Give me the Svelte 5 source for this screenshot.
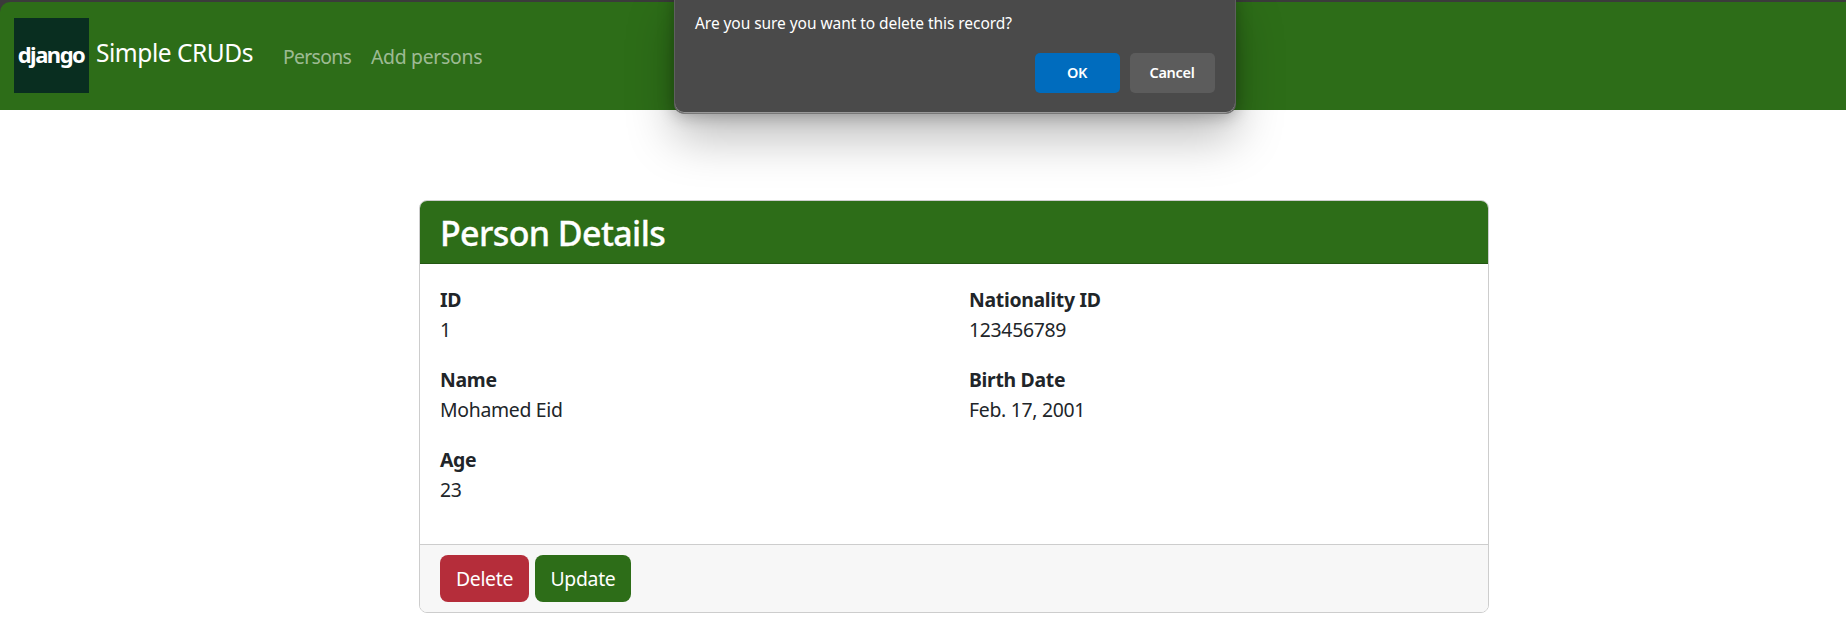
<script>
  const columns = [
    [
      { label: 'ID', value: '1' },
      { label: 'Name', value: 'Mohamed Eid' },
      { label: 'Age', value: '23' }
    ],
    [
      { label: 'Nationality ID', value: '123456789' },
      { label: 'Birth Date', value: 'Feb. 17, 2001' }
    ]
  ];
</script>

<div class="page">
  <nav>
    <div class="logo"><span>django</span></div>
    <span class="brand">Simple CRUDs</span>
    <div class="links">
      <span class="persons">Persons</span>
      <span class="add">Add persons</span>
    </div>
  </nav>

  <main>
    <section class="card">
      <header><h3>Person Details</h3></header>
      <div class="body">
        {#each columns as column}
          <dl>
            {#each column as field}
              <dt>{field.label}</dt>
              <dd>{field.value}</dd>
            {/each}
          </dl>
        {/each}
      </div>
      <footer>
        <button class="delete">Delete</button>
        <button class="update">Update</button>
      </footer>
    </section>
  </main>

  <div class="dialog" role="dialog">
    <p>Are you sure you want to delete this record?</p>
    <div class="actions">
      <button class="ok">OK</button>
      <button class="cancel">Cancel</button>
    </div>
  </div>
</div>

<style>
  :global(body) {
    margin: 0;
    background: #fff;
  }
  .page {
    position: relative;
    height: 621px;
    overflow: hidden;
    box-sizing: border-box;
    padding-top: 2px;
    font-family: 'Noto Sans', 'Open Sans', sans-serif;
    font-size: 19.4px;
    letter-spacing: -0.4px;
    color: #212529;
    background: linear-gradient(#3b3b3b 20px, #fff 20px);
  }
  nav {
    display: flex;
    align-items: center;
    height: 108px;
    box-sizing: border-box;
    padding: 0 14px 1px;
    background: #2d6d18;
    border-radius: 10px 0 0 0;
    color: #fff;
  }
  .logo {
    display: flex;
    align-items: center;
    justify-content: center;
    width: 75px;
    height: 75px;
    background: #092e20;
    font-size: 22px;
    font-weight: 700;
    letter-spacing: -1.5px;
  }
  .logo span {
    line-height: 30px;
    padding: 0 1px 4px 0;
  }
  .brand {
    margin-left: 7px;
    width: 160px;
    white-space: nowrap;
    font-size: 24.5px;
    line-height: 38px;
    padding-bottom: 6px;
    letter-spacing: -0.46px;
  }
  .links {
    display: flex;
    padding: 3px 0 0 27px;
    line-height: 30px;
    color: rgba(255, 255, 255, 0.55);
    letter-spacing: -0.3px;
  }
  .links .persons {
    width: 68px;
    letter-spacing: -0.7px;
  }
  .links .add {
    margin-left: 20px;
  }
  main {
    padding: 90px 357px 0 419px;
  }
  .card {
    border: 1px solid #cdcdcd;
    border-radius: 8px;
    overflow: hidden;
    height: 411px;
    display: flex;
    flex-direction: column;
  }
  header {
    height: 62px;
    display: flex;
    align-items: center;
    padding-left: 20px;
    background: #2d6d18;
    border-bottom: 1px solid #245713;
    color: #fff;
  }
  h3 {
    margin: 0;
    padding-top: 2px;
    font-size: 34px;
    line-height: 42px;
    font-weight: 500;
    letter-spacing: -0.62px;
    -webkit-text-stroke: 0.3px #fff;
  }
  .body {
    flex: 1;
    display: grid;
    grid-template-columns: 529px 1fr;
    padding: 21px 20px 0;
  }
  dl {
    margin: 0;
    line-height: 30px;
  }
  dt {
    font-weight: 700;
    letter-spacing: -0.3px;
  }
  dd {
    margin: 0 0 20px;
    letter-spacing: -0.3px;
  }
  footer {
    display: flex;
    gap: 6px;
    height: 67px;
    box-sizing: content-box;
    border-top: 1px solid #cdcdcd;
    background: #f7f7f7;
    padding-left: 20px;
    align-items: center;
  }
  button {
    border: 0;
    padding: 0;
    font: inherit;
    letter-spacing: inherit;
    color: #fff;
  }
  footer button {
    height: 47px;
    border-radius: 8px;
    letter-spacing: -0.3px;
  }
  .delete {
    width: 89px;
    background: #b52d3a;
  }
  .update {
    width: 96px;
    background: #2d6d18;
  }
  .dialog {
    position: absolute;
    left: 674px;
    top: -10px;
    width: 562px;
    height: 124px;
    box-sizing: border-box;
    padding: 19px 20px 0;
    border: 1px solid #5f5f5f;
    border-bottom-color: #777;
    border-radius: 10px;
    background: #4a4a4a;
    box-shadow:
      inset 0 -1px 0 #999,
      0 24px 48px rgba(0, 0, 0, 0.26),
      0 2px 16px rgba(0, 0, 0, 0.27);
    color: #fff;
  }
  .dialog p {
    margin: 0;
    font-size: 15.5px;
    line-height: 26px;
    letter-spacing: -0.06px;
  }
  .actions {
    display: flex;
    justify-content: flex-end;
    gap: 10px;
    margin-top: 17px;
  }
  .actions button {
    width: 85px;
    height: 40px;
    border-radius: 5px;
    padding: 0 1px 2px 0;
    font-size: 14.5px;
    font-weight: 600;
    letter-spacing: -0.3px;
  }
  .ok {
    background: #006cbe;
  }
  .cancel {
    background: #5c5c5c;
  }
</style>
